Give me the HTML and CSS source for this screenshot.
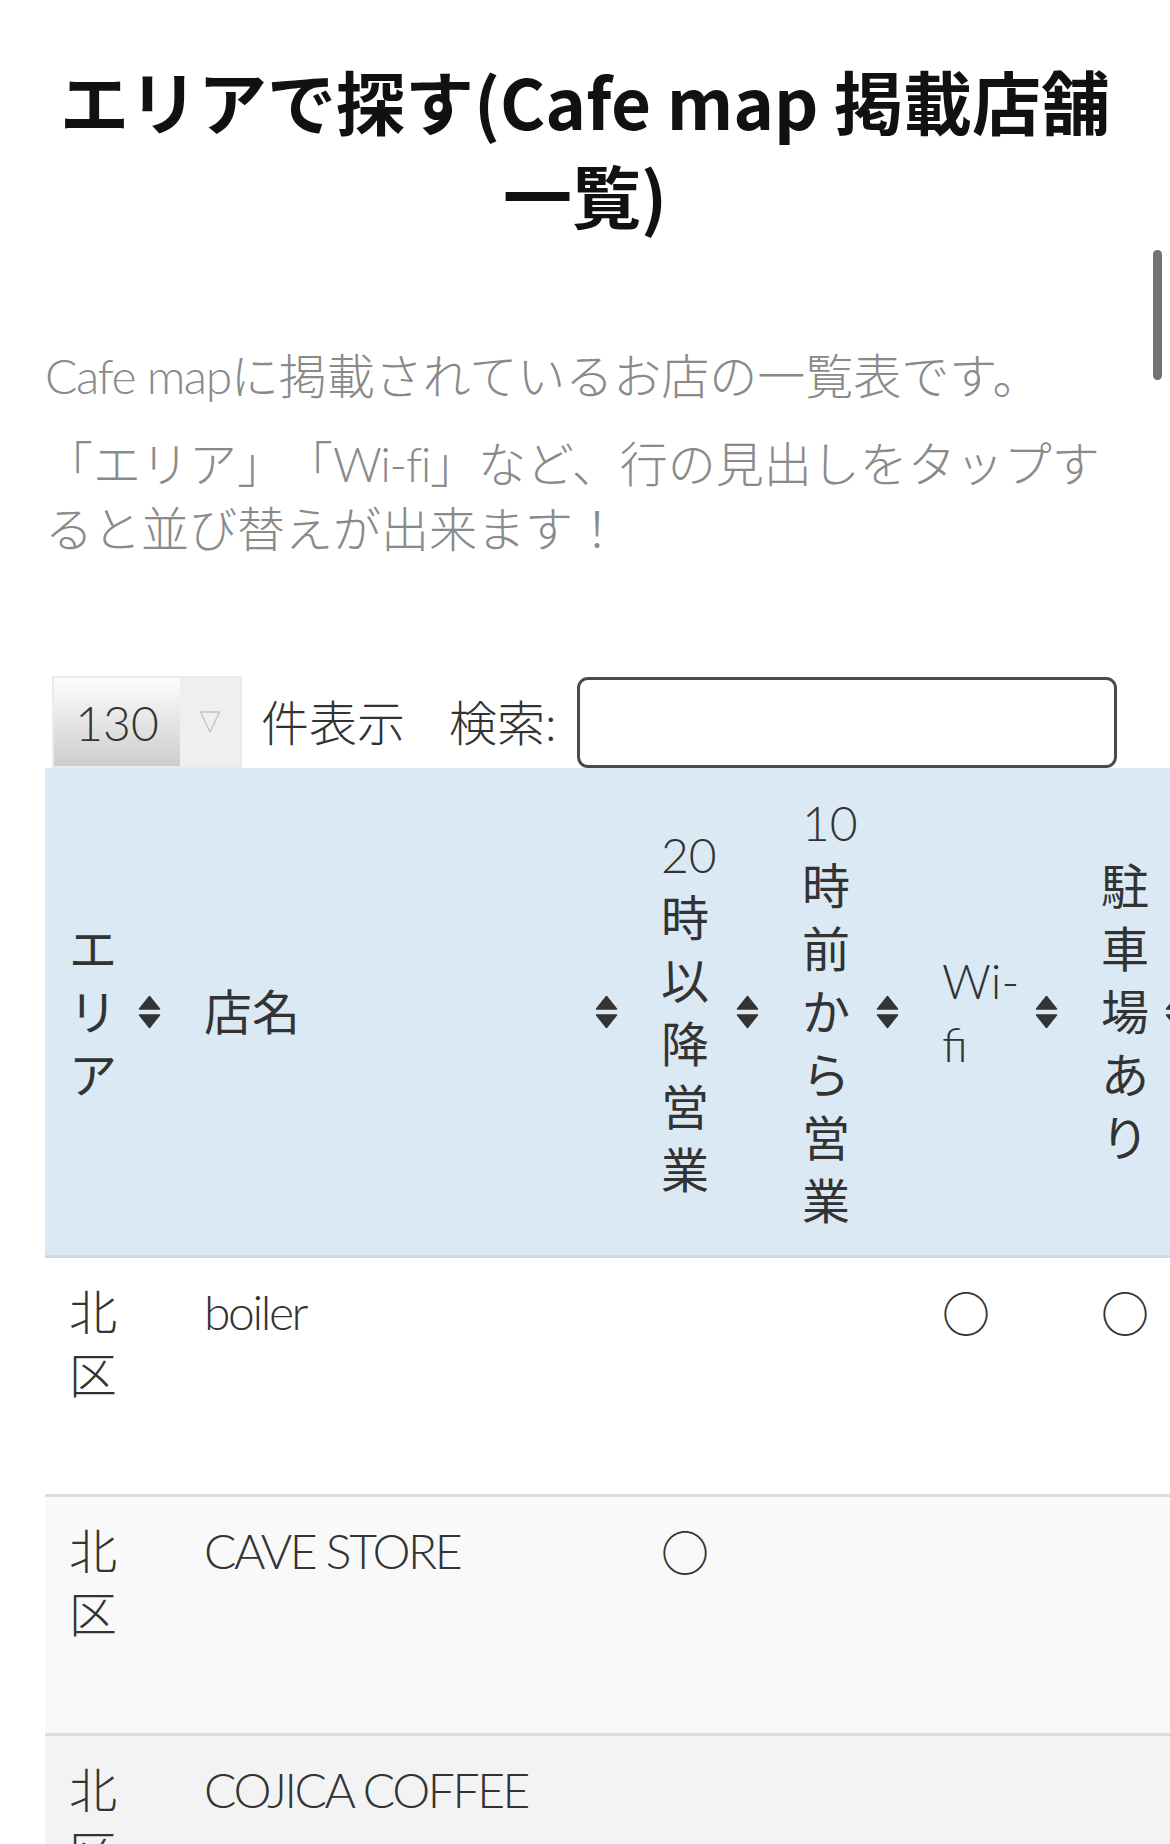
FILE: index.html
```html
<!DOCTYPE html>
<html lang="ja">
<head>
<meta charset="utf-8">
<title>エリアで探す(Cafe map 掲載店舗一覧)</title>
<link rel="stylesheet" href="styles.css">
</head>
<body>
<main class="page">
  <h1 class="title">エリアで探す(Cafe map 掲載店舗一覧)</h1>
  <p class="lead"><span class="en">Cafe map</span>に掲載されているお店の一覧表です。</p>
  <p class="lead">「エリア」「<span class="en">Wi-fi</span>」など、行の見出しをタップすると並び替えが出来ます！</p>

  <div class="controls">
    <div class="length">
      <div class="select">
        <span class="select-value">130</span>
        <span class="select-arrow">
          <svg width="22" height="24" viewBox="0 0 22 24"><path d="M1.5 2 L20.5 2 L11 22 Z" fill="none" stroke="#c4c4c4" stroke-width="1.4" stroke-linejoin="round"/></svg>
        </span>
      </div>
      <span class="ctl-label">件表示</span>
    </div>
    <div class="filter">
      <span class="ctl-label">検索<span class="en">:</span></span>
      <input class="search-input" type="search" aria-label="検索">
    </div>
  </div>

  <div class="table-wrap">
    <table class="shops">
      <thead>
        <tr>
          <th class="c-area"><div class="th-in"><span class="th-label">エリア</span><svg class="sort" width="23" height="34" viewBox="0 0 23 34"><path d="M11.5 1.5 L21.5 14 L1.5 14 Z"/><path d="M1.5 20 L21.5 20 L11.5 32.5 Z"/></svg></div></th>
          <th class="c-name"><div class="th-in"><span class="th-label">店名</span><svg class="sort" width="23" height="34" viewBox="0 0 23 34"><path d="M11.5 1.5 L21.5 14 L1.5 14 Z"/><path d="M1.5 20 L21.5 20 L11.5 32.5 Z"/></svg></div></th>
          <th class="c-late"><div class="th-in"><span class="th-label"><span class="en">20</span>時以降営業</span><svg class="sort" width="23" height="34" viewBox="0 0 23 34"><path d="M11.5 1.5 L21.5 14 L1.5 14 Z"/><path d="M1.5 20 L21.5 20 L11.5 32.5 Z"/></svg></div></th>
          <th class="c-early"><div class="th-in"><span class="th-label"><span class="en">10</span>時前から営業</span><svg class="sort" width="23" height="34" viewBox="0 0 23 34"><path d="M11.5 1.5 L21.5 14 L1.5 14 Z"/><path d="M1.5 20 L21.5 20 L11.5 32.5 Z"/></svg></div></th>
          <th class="c-wifi"><div class="th-in"><span class="th-label"><span class="en">Wi-fi</span></span><svg class="sort" width="23" height="34" viewBox="0 0 23 34"><path d="M11.5 1.5 L21.5 14 L1.5 14 Z"/><path d="M1.5 20 L21.5 20 L11.5 32.5 Z"/></svg></div></th>
          <th class="c-park"><div class="th-in"><span class="th-label">駐車場あり</span><svg class="sort" width="23" height="34" viewBox="0 0 23 34"><path d="M11.5 1.5 L21.5 14 L1.5 14 Z"/><path d="M1.5 20 L21.5 20 L11.5 32.5 Z"/></svg></div></th>
        </tr>
      </thead>
      <tbody>
        <tr>
          <td>北区</td>
          <td class="name">boiler</td>
          <td></td>
          <td></td>
          <td class="mark">○</td>
          <td class="mark">○</td>
        </tr>
        <tr>
          <td>北区</td>
          <td class="name">CAVE STORE</td>
          <td class="mark">○</td>
          <td></td>
          <td></td>
          <td></td>
        </tr>
        <tr>
          <td>北区</td>
          <td class="name">COJICA COFFEE</td>
          <td></td>
          <td></td>
          <td></td>
          <td></td>
        </tr>
      </tbody>
    </table>
  </div>
</main>
<div class="scroll-thumb" aria-hidden="true"></div>
</body>
</html>
```

FILE: styles.css
```css
html, body {
  margin: 0;
  padding: 0;
  background: #ffffff;
}

body {
  font-family: "Lato", "Noto Sans CJK JP", sans-serif;
  font-weight: 300;
  color: #333333;
  overflow-x: hidden;
  text-spacing-trim: space-all;
}

.page {
  padding: 0 45px;
}

.title {
  margin: 53px 0 0;
  font-family: "Noto Sans CJK JP", sans-serif;
  font-weight: 700;
  font-size: 69px;
  line-height: 94px;
  text-align: center;
  color: #111111;
}

.lead {
  margin: 23px 0 0;
  font-size: 48px;
  line-height: 65px;
  color: #8a8a8a;
}

.title + .lead {
  margin-top: 102px;
}

.en {
  letter-spacing: -0.03em;
}

/* controls */
.controls {
  display: flex;
  align-items: center;
  height: 92px;
  margin-top: 115px;
}

.length {
  display: flex;
  align-items: center;
  gap: 19px;
  margin-left: 7px;
}

.select {
  display: flex;
  width: 190px;
  height: 92px;
  box-sizing: border-box;
  border: 2px solid #ebebeb;
}

.select-value {
  width: 126px;
  display: flex;
  align-items: center;
  justify-content: center;
  background: linear-gradient(#fdfdfd, #cdcdcd);
  font-size: 48px;
  color: #333333;
}

.select-arrow {
  flex: 1;
  display: flex;
  align-items: center;
  justify-content: center;
  background: #efefef;
}

.ctl-label {
  font-size: 48px;
  line-height: 65px;
  color: #333333;
  white-space: nowrap;
}

.filter {
  display: flex;
  align-items: center;
  gap: 22px;
  margin-left: 44px;
}

.search-input {
  width: 540px;
  height: 91px;
  box-sizing: border-box;
  border: 3px solid #4a4a4a;
  border-radius: 11px;
  background: #ffffff;
  padding: 0 16px;
  font-size: 40px;
  -webkit-appearance: none;
  appearance: none;
  outline: none;
}

/* table */
.table-wrap {
  overflow: hidden;
  margin-right: -45px;
}

.shops {
  border-collapse: separate;
  border-spacing: 0;
  table-layout: fixed;
  width: 1162px;
  font-size: 48px;
  line-height: 63px;
}

.shops th,
.shops td {
  box-sizing: border-box;
}

.c-area { width: 135px; }
.c-name { width: 457px; }
.c-late { width: 141px; }
.c-early { width: 140px; }
.c-wifi { width: 159px; }
.c-park { width: 130px; }

.shops th {
  background: #dae9f3;
  padding: 23px 19px 23px 24px;
  vertical-align: middle;
  text-align: left;
  font-weight: 400;
  color: #333333;
  border-bottom: 3px solid #d8d8d8;
}

.th-in {
  display: flex;
  align-items: center;
  justify-content: space-between;
}

.th-label {
  min-width: 0;
}

.c-wifi .th-label {
  max-width: 74px;
}

.th-label .en {
  letter-spacing: 0;
  font-weight: 300;
}

.sort {
  flex: none;
  fill: #333333;
  stroke: #333333;
  stroke-width: 1.5;
  stroke-linejoin: round;
}

.shops td {
  padding: 22px 19px 22px 24px;
  vertical-align: top;
  border-bottom: 3px solid #dcdcdc;
  color: #333333;
}

.shops tbody tr {
  height: 239px;
}

.shops tbody tr:nth-child(2) td {
  background: #f9f9f9;
}

.shops tbody tr:nth-child(3) td {
  background: #f3f3f3;
}

.name {
  letter-spacing: -0.05em;
}

.mark {
  font-family: "Noto Sans CJK JP", sans-serif;
  font-weight: 400;
}

.scroll-thumb {
  position: fixed;
  top: 250px;
  right: 8px;
  width: 9px;
  height: 130px;
  border-radius: 5px;
  background: #727272;
}
```
